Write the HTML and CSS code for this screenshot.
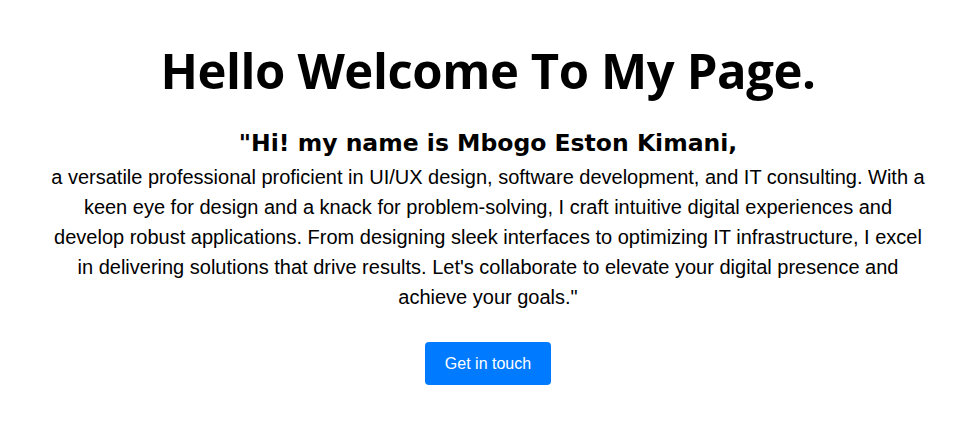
FILE: index.html
```html
<!DOCTYPE html>
<html lang="en">
<head>
<meta charset="utf-8">
<title>Hello Welcome To My Page.</title>
<link rel="stylesheet" href="styles.css">
</head>
<body>
<main class="hero">
  <h1 class="hero-title">Hello Welcome To My Page.</h1>
  <h2 class="hero-name">"Hi! my name is Mbogo Eston Kimani,</h2>
  <p class="hero-text">a versatile professional proficient in UI/UX design, software development, and IT consulting. With a keen eye for design and a knack for problem-solving, I craft intuitive digital experiences and develop robust applications. From designing sleek interfaces to optimizing IT infrastructure, I excel in delivering solutions that drive results. Let's collaborate to elevate your digital presence and achieve your goals."</p>
  <a class="btn" href="#">Get in touch</a>
</main>
</body>
</html>
```
FILE: styles.css
```css
html, body {
  margin: 0;
  padding: 0;
  background: #fff;
  color: #000;
}
.hero {
  display: flex;
  flex-direction: column;
  align-items: center;
  text-align: center;
  padding: 40px 0 0 10px;
}
.hero-title {
  font-family: "Open Sans", sans-serif;
  font-weight: 700;
  font-size: 49px;
  letter-spacing: -0.4px;
  line-height: 60px;
  margin: 0 0 26px;
}
.hero-name {
  font-family: "DejaVu Sans", sans-serif;
  font-weight: 700;
  font-size: 23.5px;
  line-height: 34px;
  margin: 0 0 2px;
}
.hero-text {
  font-family: "Liberation Sans", Arial, sans-serif;
  font-size: 20px;
  line-height: 30px;
  width: 878px;
  margin: 0 0 30px;
}
.btn {
  display: inline-flex;
  align-items: center;
  justify-content: center;
  width: 126px;
  height: 43px;
  background: #007bff;
  color: #fff;
  border-radius: 4px;
  font-family: "Liberation Sans", Arial, sans-serif;
  font-size: 16px;
  text-decoration: none;
}
```
